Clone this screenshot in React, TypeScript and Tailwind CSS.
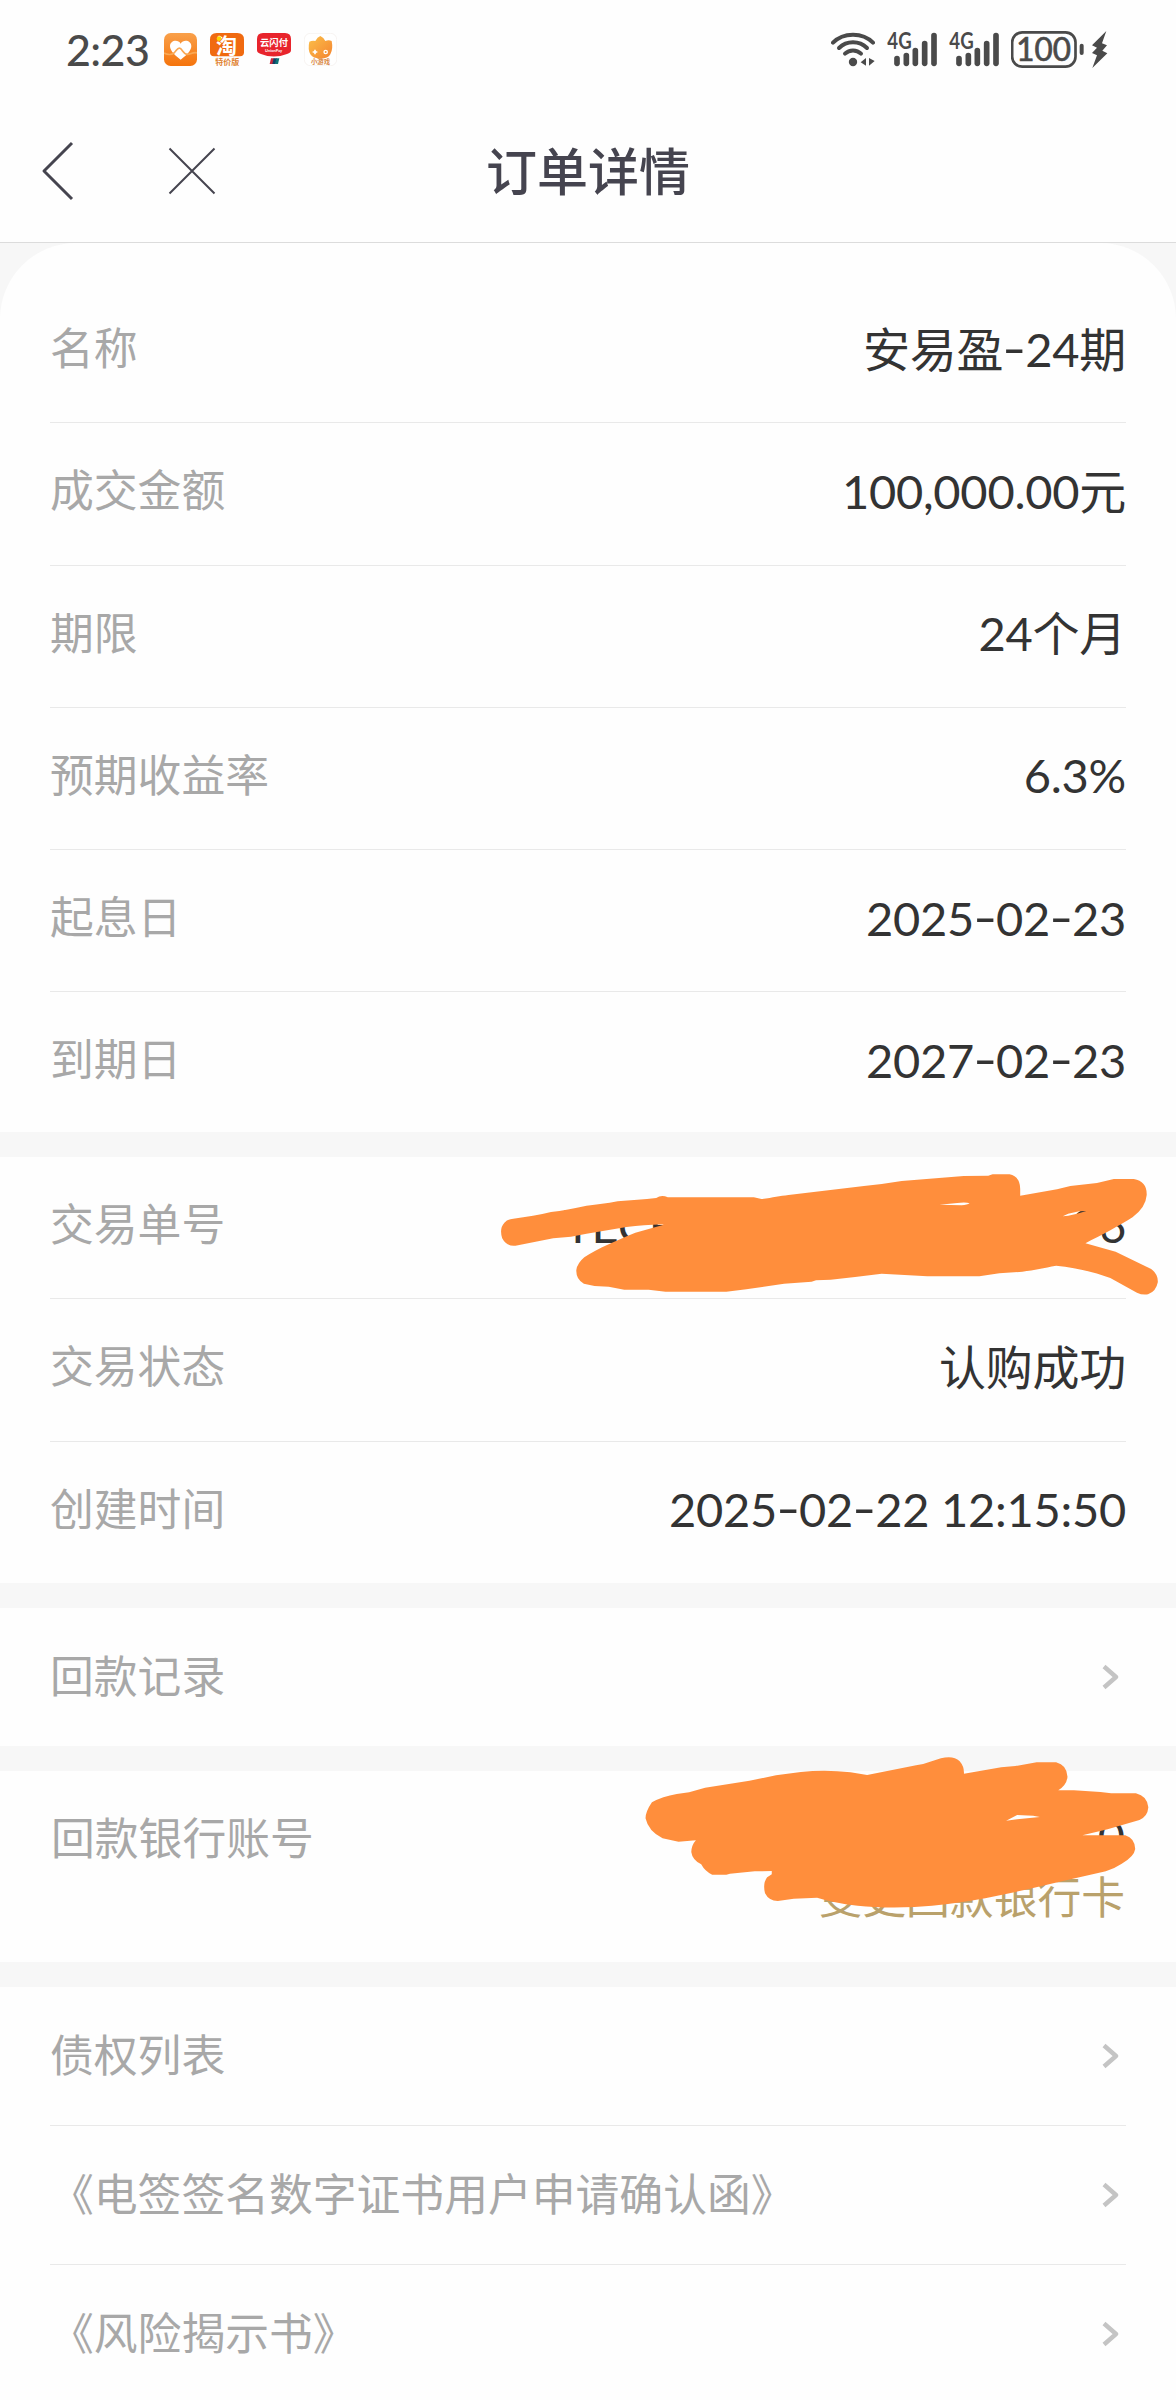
import type { ReactNode } from 'react'

const INK = '#4a4a4a'

export default function App() {
  return (
    <div className="w-[1176px] h-[2400px] overflow-hidden bg-[#f7f7f7] font-['Lato','Noto_Sans_CJK_SC',sans-serif]">
      <StatusBar />
      <NavBar />

      <Section className="rounded-t-[76px] pt-[38px] h-[889px]">
        <Row label="名称" value="安易盈-24期" />
        <Row label="成交金额" value="100,000.00元" />
        <Row label="期限" value="24个月" />
        <Row label="预期收益率" value="6.3%" />
        <Row label="起息日" value="2025-02-23" />
        <Row label="到期日" value="2027-02-23" last />
      </Section>

      <Section className="mt-[25px] h-[426px]">
        <Row label="交易单号">
          <span className="flex w-[562px] justify-between">
            <span>TECF</span>
            <span>96</span>
          </span>
        </Row>
        <Row label="交易状态" value="认购成功" />
        <Row label="创建时间" value="2025-02-22 12:15:50" last />
        <OrderScribble />
      </Section>

      <Section className="mt-[25px] h-[138px]">
        <LinkRow label="回款记录" last />
      </Section>

      <Section className="mt-[25px] h-[191px]">
        <div className="flex justify-between px-[51px] pt-[32px]">
          <span className="text-[43.8px] leading-[70px] text-[#a8a8a8]">回款银行账号</span>
          <div className="flex flex-col items-end">
            <span className="text-[47px] leading-[66px] text-[#333333]">0</span>
            <span className="text-[43.8px] leading-[56px] text-[#b9a16b]">变更回款银行卡</span>
          </div>
        </div>
        <AccountScribble />
      </Section>

      <Section className="mt-[25px] h-[413px]">
        <LinkRow label="债权列表" />
        <LinkRow label="《电签签名数字证书用户申请确认函》" />
        <LinkRow label="《风险揭示书》" last />
      </Section>
    </div>
  )
}

function Section({ className = '', children }: { className?: string; children: ReactNode }) {
  return <section className={`relative bg-[#fefefe] ${className}`}>{children}</section>
}

interface RowProps {
  label: string
  value?: string
  last?: boolean
  children?: ReactNode
}

function Row({ label, value, last, children }: RowProps) {
  return (
    <div
      className={`mx-[50px] flex items-center justify-between pb-[5px] ${
        last ? 'h-[141px]' : 'h-[142.25px] border-b border-[#e9e9e9]'
      }`}
    >
      <span className="text-[43.8px] leading-none text-[#a8a8a8]">{label}</span>
      <span className="text-[47px] leading-none tracking-[-0.25px] whitespace-pre text-[#333333]">
        {value ? <Value text={value} /> : children}
      </span>
    </div>
  )
}

// Hyphens are stretched so dates read with wide, raised separators
function Value({ text }: { text: string }) {
  return text.split(/(-)/).map((part, i) =>
    part === '-' ? (
      <span key={i} className="inline-block w-[22px] origin-center -translate-y-[2px] scale-x-[1.4] text-center">
        -
      </span>
    ) : (
      <span key={i}>{part}</span>
    ),
  )
}

function LinkRow({ label, last }: { label: string; last?: boolean }) {
  return (
    <div
      className={`mx-[50px] flex h-[139px] items-center justify-between pb-px ${
        last ? '' : 'border-b border-[#e9e9e9]'
      }`}
    >
      <span className="text-[43.8px] leading-none text-[#a8a8a8]">{label}</span>
      <svg viewBox="0 0 18 26" className="mr-[7px] h-[26px] w-[18px]" fill="none">
        <path d="M3 2.5 L15 13 L3 23.5" stroke="#c4c4c4" strokeWidth="4.4" strokeLinejoin="round" />
      </svg>
    </div>
  )
}

function NavBar() {
  return (
    <header className="grid h-[143px] grid-cols-[1fr_auto_1fr] items-center border-b border-[#dcdcdc] bg-[#fefefe]">
      <div className="flex items-center pl-[41px]">
        <svg viewBox="0 0 34 62" className="h-[62px] w-[34px]" fill="none">
          <path d="M31 3 L3 31 L31 59" stroke="#45444f" strokeWidth="3" strokeLinejoin="round" />
        </svg>
        <svg viewBox="0 0 48 48" className="ml-[93px] h-[48px] w-[48px]" fill="none">
          <path d="M1.5 1.5 L46.5 46.5 M46.5 1.5 L1.5 46.5" stroke="#45444f" strokeWidth="2" />
        </svg>
      </div>
      <h1 className="text-[51px] leading-none font-medium text-[#45444f]">订单详情</h1>
      <div />
    </header>
  )
}

function StatusBar() {
  return (
    <div className="flex h-[100px] items-start bg-[#fefefe] pt-[30px]">
      <span className="ml-[66px] w-[98px] text-[43px] leading-[40px] font-medium tracking-[-0.6px] text-[#4a4a4a]">
        2:23
      </span>
      <div className="flex gap-[13px] pt-[3px]">
        <HeartApp />
        <TaoApp />
        <PayApp />
        <GameApp />
      </div>
      <div className="ml-auto flex pr-[68px]">
        <Wifi />
        <Signal className="ml-[12px]" />
        <Signal className="ml-[12px]" />
        <Battery />
        <svg viewBox="843 60 51 120" className="ml-[7px] h-[40px] w-[17px]">
          <path
            d="M889 63 L846 106 L861 113 L846 129 L861 136 L847 174 L892 130 L877 122 L891 106 L876 100 Z"
            fill={INK}
          />
        </svg>
      </div>
    </div>
  )
}

function Wifi() {
  return (
    <svg viewBox="63 60 132 120" className="h-[40px] w-[44px]" fill="none">
      <g stroke={INK} strokeWidth="12" strokeLinecap="round">
        <path d="M69 98 C100 66 158 66 189 98" />
        <path d="M87 114 C110 91 148 91 171 114" />
        <path d="M105 131 C118 118 140 118 153 131" />
      </g>
      <circle cx="129" cy="156" r="12.5" fill={INK} />
      <path d="M168 144 V167 L152 157 Z M177 144 L194 153 L177 167 Z" fill={INK} />
    </svg>
  )
}

function Signal({ className }: { className: string }) {
  return (
    <svg viewBox="231 60 150 120" className={`h-[40px] w-[50px] overflow-visible ${className}`}>
      <text x="232" y="118" fontSize="67" fontWeight="700" fill={INK} textLength="73" lengthAdjust="spacingAndGlyphs">
        4G
      </text>
      <g stroke={INK} strokeWidth="17" strokeLinecap="round">
        <path d="M261 146 V160" />
        <path d="M289 137 V160" />
        <path d="M316 122 V160" />
        <path d="M344 101 V160" />
        <path d="M372 77 V160" />
      </g>
    </svg>
  )
}

function Battery() {
  return (
    <svg viewBox="603 60 219 120" className="ml-[12px] h-[40px] w-[73px]" fill="none">
      <rect x="606.5" y="67" width="190" height="103" rx="30" stroke={INK} strokeWidth="8" />
      <path d="M815 107 V129" stroke={INK} strokeWidth="12" strokeLinecap="round" />
      <text
        x="619"
        y="153"
        fontSize="96"
        fill={INK}
        stroke={INK}
        strokeWidth="2"
        textLength="164"
        lengthAdjust="spacingAndGlyphs"
      >
        100
      </text>
    </svg>
  )
}

function HeartApp() {
  return (
    <svg viewBox="0 0 99 99" className="h-[33px] w-[33px]">
      <defs>
        <linearGradient id="heart-bg" x1="0" y1="0" x2="0" y2="1">
          <stop offset="0" stopColor="#f9a04a" />
          <stop offset="1" stopColor="#f5740c" />
        </linearGradient>
      </defs>
      <rect width="99" height="99" rx="20" fill="url(#heart-bg)" />
      <path d="M50 80 C36 70 18 54 18 40 C18 22 42 18 50 32 C58 18 82 22 82 40 C82 54 64 70 50 80 Z" fill="#fff" />
      <path
        d="M0 60 C12 66 22 66 30 60 C38 52 42 42 48 46 C56 50 58 64 70 64 C80 64 88 56 99 60"
        fill="none"
        stroke="#f9a955"
        strokeWidth="5"
      />
    </svg>
  )
}

function TaoApp() {
  return (
    <svg viewBox="0 0 102 99" className="h-[33px] w-[34px] overflow-visible">
      <path d="M20 0 H82 Q102 0 102 20 V58 Q102 70 90 70 H12 Q0 70 0 58 V20 Q0 0 20 0 Z" fill="#f06a10" />
      <text x="18" y="59" fontSize="63" fontWeight="700" fill="#fff">
        淘
      </text>
      <circle cx="27" cy="17" r="7" fill="#ffd400" />
      <text x="16" y="95" fontSize="24" fontWeight="700" fill="#e0812f">
        特价版
      </text>
    </svg>
  )
}

function PayApp() {
  return (
    <svg viewBox="0 0 102 99" className="h-[33px] w-[34px]">
      <path
        d="M18 0 H84 Q102 0 102 18 V52 Q102 60 90 63 Q50 78 12 63 Q0 60 0 52 V18 Q0 0 18 0 Z"
        fill="#e8242c"
      />
      <text x="9" y="40" fontSize="28" fontWeight="700" fill="#fff">
        云闪付
      </text>
      <text x="24" y="58" fontSize="12" fontWeight="700" fill="#fff">
        UnionPay
      </text>
      <path d="M42 76 H52 L48 93 H38 Z" fill="#c8283a" />
      <path d="M50 76 H60 L56 93 H46 Z" fill="#153f66" />
      <path d="M58 76 H67 L63 93 H54 Z" fill="#0e7277" />
    </svg>
  )
}

function GameApp() {
  return (
    <svg viewBox="0 0 99 99" className="h-[33px] w-[33px]">
      <defs>
        <linearGradient id="game-bg" x1="0" y1="0" x2="1" y2="1">
          <stop offset="0" stopColor="#fbc04a" />
          <stop offset="1" stopColor="#f5842f" />
        </linearGradient>
      </defs>
      <rect x="1" y="1" width="97" height="97" rx="18" fill="#fff" stroke="#f3efec" strokeWidth="2" />
      <path
        d="M16 26 Q24 22 34 24 Q40 12 49 9 Q60 14 64 24 Q74 20 83 24 Q88 48 79 64 Q72 77 50 77 Q28 77 19 64 Q11 48 16 26 Z"
        fill="url(#game-bg)"
      />
      <path d="M33 50 V64 M26 57 H40" stroke="#fff" strokeWidth="5" />
      <circle cx="65" cy="57" r="5" fill="none" stroke="#fff" strokeWidth="4" />
      <text x="21" y="94" fontSize="19" fontWeight="700" fill="#d98a48">
        小游戏
      </text>
    </svg>
  )
}

// Marker strokes hiding the order number
function OrderScribble() {
  return (
    <svg
      viewBox="0 0 1568 600"
      preserveAspectRatio="none"
      className="absolute top-[-37px] left-[480px] h-[200px] w-[696px]"
    >
      <path
        fillRule="evenodd"
        fill="#ff8e3c"
        d="M75 296 C105 291 135 284 160 276 C185 273 210 265 240 257 C265 254 285 250 310 244 C340 240 370 238 397 234 Q409 223 423 232 H617 L634 237 C660 233 675 228 695 225 L865 198 L905 192 L950 183 L1090 168 L1145 167 L1155 163 H1193 Q1218 170 1217 210 V227 L1300 208 L1330 198 L1390 189 L1428 177 H1473 Q1503 184 1502 225 Q1500 262 1470 292 C1440 318 1400 345 1364 370 L1432 395 L1512 447 Q1528 462 1527 487 Q1523 515 1505 523 Q1492 526 1480 518 L1420 474 C1380 455 1340 442 1298 437 C1270 444 1250 450 1222 455 L1170 460 L1125 469 H1008 L905 461 L845 471 L790 479 L757 481 L747 485 L685 491 L600 508 L555 515 H418 L380 509 H325 L290 500 L258 498 L234 491 Q216 478 217 450 Q219 430 235 412 C265 385 310 360 350 338 L414 314 C390 313 360 317 330 321 L240 341 L205 350 L165 355 L80 377 Q60 380 50 355 Q43 325 55 308 Q62 298 75 296 Z M1035 254 L1075 249 Q1095 246 1103 250 Q1098 255 1085 256 Z M1313 289 L1325 281 L1350 274 L1366 273 L1345 281 L1325 287 Z"
      />
    </svg>
  )
}

// Marker strokes hiding the bank account
function AccountScribble() {
  return (
    <svg
      viewBox="0 0 1568 720"
      preserveAspectRatio="none"
      className="absolute top-[-41px] left-[620px] h-[240px] w-[556px]"
    >
      <path
        fillRule="evenodd"
        fill="#ff8e3c"
        d="M160 192 L195 187 L240 173 L365 152 L440 136 L510 126 Q580 118 650 127 L697 135 L835 106 L855 102 L905 85 Q940 75 958 94 Q971 110 970 131 L1075 112 L1115 108 L1175 97 H1230 Q1260 105 1262 140 Q1260 165 1236 181 H1280 L1355 186 L1385 190 H1455 Q1487 198 1490 232 Q1488 260 1465 270 L1375 298 L1304 316 H1425 Q1452 325 1453 357 Q1450 380 1415 401 Q1395 415 1370 424 L1240 455 L1150 478 L1030 505 Q930 525 830 531 Q740 535 670 527 Q600 518 556 503 L490 506 L445 513 Q420 513 409 490 Q402 460 415 442 L428 433 V423 L380 424 L310 431 L300 434 H260 Q240 425 229 403 Q204 390 201 366 Q202 345 214 331 L165 335 L120 325 Q80 304 72 265 Q72 245 90 217 Q120 199 160 192 Z M1089 272 L1120 255 L1165 257 L1184 261 L1120 268 Z"
      />
    </svg>
  )
}
